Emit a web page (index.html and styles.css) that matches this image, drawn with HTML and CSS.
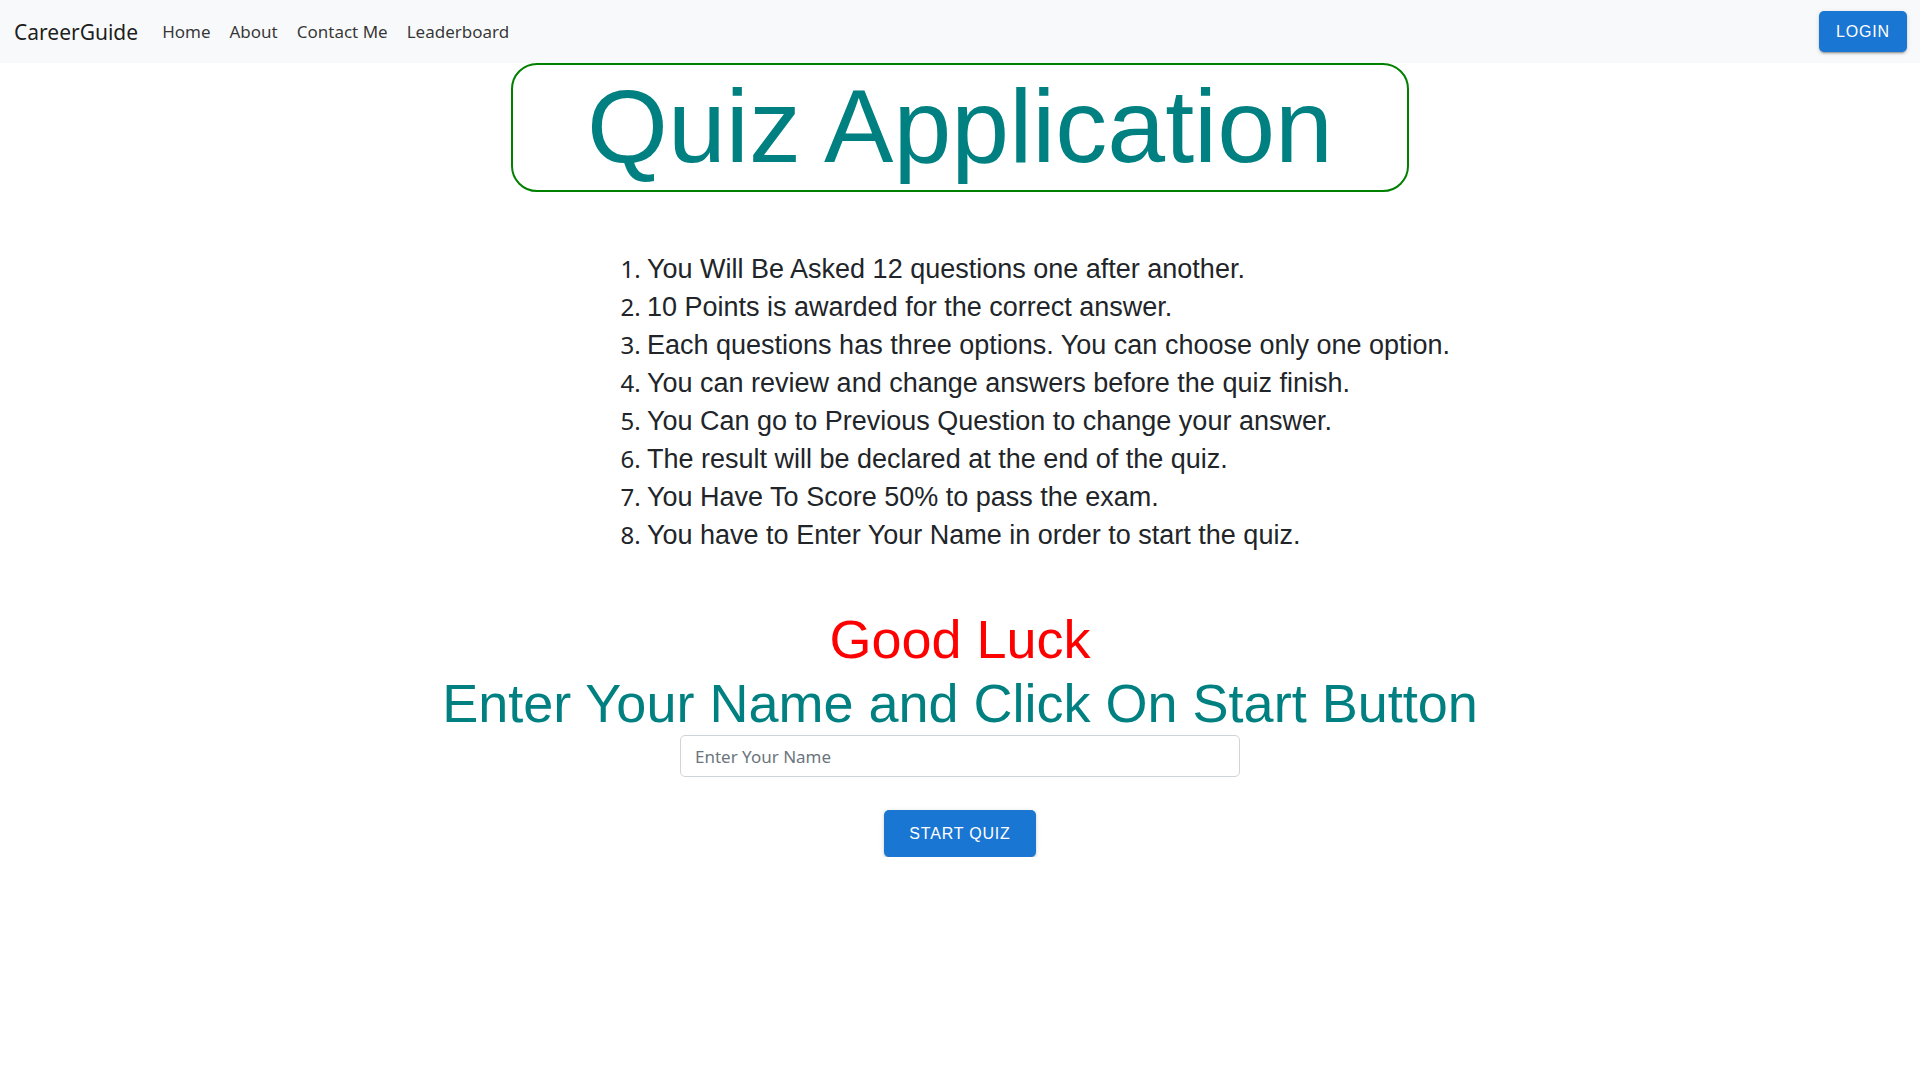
FILE: index.html
```html
<!DOCTYPE html>
<html lang="en">
<head>
<meta charset="utf-8">
<title>CareerGuide Quiz</title>
<link rel="stylesheet" href="styles.css">
</head>
<body>
<nav class="navbar">
  <div class="nav-left">
    <a class="brand" href="#">CareerGuide</a>
    <ul class="nav-links">
      <li><a href="#">Home</a></li>
      <li><a href="#">About</a></li>
      <li><a href="#">Contact Me</a></li>
      <li><a href="#">Leaderboard</a></li>
    </ul>
  </div>
  <button class="btn-login">LOGIN</button>
</nav>
<main class="main">
  <div class="title-box"><h1 class="title">Quiz Application</h1></div>
  <ol class="rules">
    <li>You Will Be Asked 12 questions one after another.</li>
    <li>10 Points is awarded for the correct answer.</li>
    <li>Each questions has three options. You can choose only one option.</li>
    <li>You can review and change answers before the quiz finish.</li>
    <li>You Can go to Previous Question to change your answer.</li>
    <li>The result will be declared at the end of the quiz.</li>
    <li>You Have To Score 50% to pass the exam.</li>
    <li>You have to Enter Your Name in order to start the quiz.</li>
  </ol>
  <h2 class="luck">Good Luck</h2>
  <h2 class="enter">Enter Your Name and Click On Start Button</h2>
  <input class="name-input" type="text" placeholder="Enter Your Name">
  <button class="btn-start">START QUIZ</button>
</main>
</body>
</html>
```
FILE: styles.css
```css
* { box-sizing: border-box; }
body {
  margin: 0;
  background: #ffffff;
  font-family: "Noto Sans", "Open Sans", sans-serif;
  color: #212529;
}
.navbar {
  height: 63px;
  background: #f8f9fa;
  display: flex;
  align-items: center;
  justify-content: space-between;
  padding: 0 13px 0 14px;
}
.nav-left { display: flex; align-items: center; }
.brand {
  font-size: 21px;
  color: rgba(0,0,0,0.9);
  text-decoration: none;
  margin-right: 24px;
}
.nav-links {
  list-style: none;
  display: flex;
  margin: 0;
  padding: 0;
  gap: 19px;
}
.nav-links a {
  font-size: 17px;
  color: rgba(0,0,0,0.8);
  text-decoration: none;
}
.btn-login, .btn-start {
  font-family: "Liberation Sans", Arial, sans-serif;
  font-weight: 400;
  font-size: 16px;
  letter-spacing: 0.8px;
  color: #fff;
  background: #1976d2;
  border: 0;
  border-radius: 5px;
  box-shadow: 0 3px 1px -2px rgba(0,0,0,.2), 0 2px 2px 0 rgba(0,0,0,.14), 0 1px 5px 0 rgba(0,0,0,.12);
}
.btn-login { width: 88px; height: 41px; }
.main {
  display: flex;
  flex-direction: column;
  align-items: center;
}
.title-box {
  width: 898px;
  height: 129px;
  border: 2px solid #008000;
  border-radius: 26px;
  display: flex;
  justify-content: center;
  align-items: center;
}
.title {
  margin: 0;
  font-family: "Liberation Sans", Arial, sans-serif;
  font-weight: 400;
  font-size: 104px;
  line-height: 1;
  color: #008080;
  padding-bottom: 4px;
}
.rules {
  align-self: flex-start;
  margin: 58px 0 0 600px;
  padding-left: 47px;
  font-family: "Liberation Sans", Arial, sans-serif;
  font-size: 27px;
  line-height: 38px;
  color: #212529;
}
.rules li::marker {
  font-family: "Noto Sans", "Open Sans", sans-serif;
  font-size: 24px;
}
.luck, .enter {
  margin: 0;
  font-family: "Liberation Sans", Arial, sans-serif;
  font-weight: 400;
  font-size: 54px;
  line-height: 64px;
}
.luck { color: #ff0000; margin-top: 53px; }
.enter { color: #008080; }
.name-input {
  margin-top: 0;
  width: 560px;
  height: 42px;
  border: 1px solid #ced4da;
  border-radius: 5px;
  padding: 0 14px;
  font-family: "Noto Sans", "Open Sans", sans-serif;
  font-size: 17px;
  color: #212529;
}
.name-input::placeholder { color: #6c757d; }
.btn-start {
  margin-top: 33px;
  width: 152px;
  height: 47px;
}
```
